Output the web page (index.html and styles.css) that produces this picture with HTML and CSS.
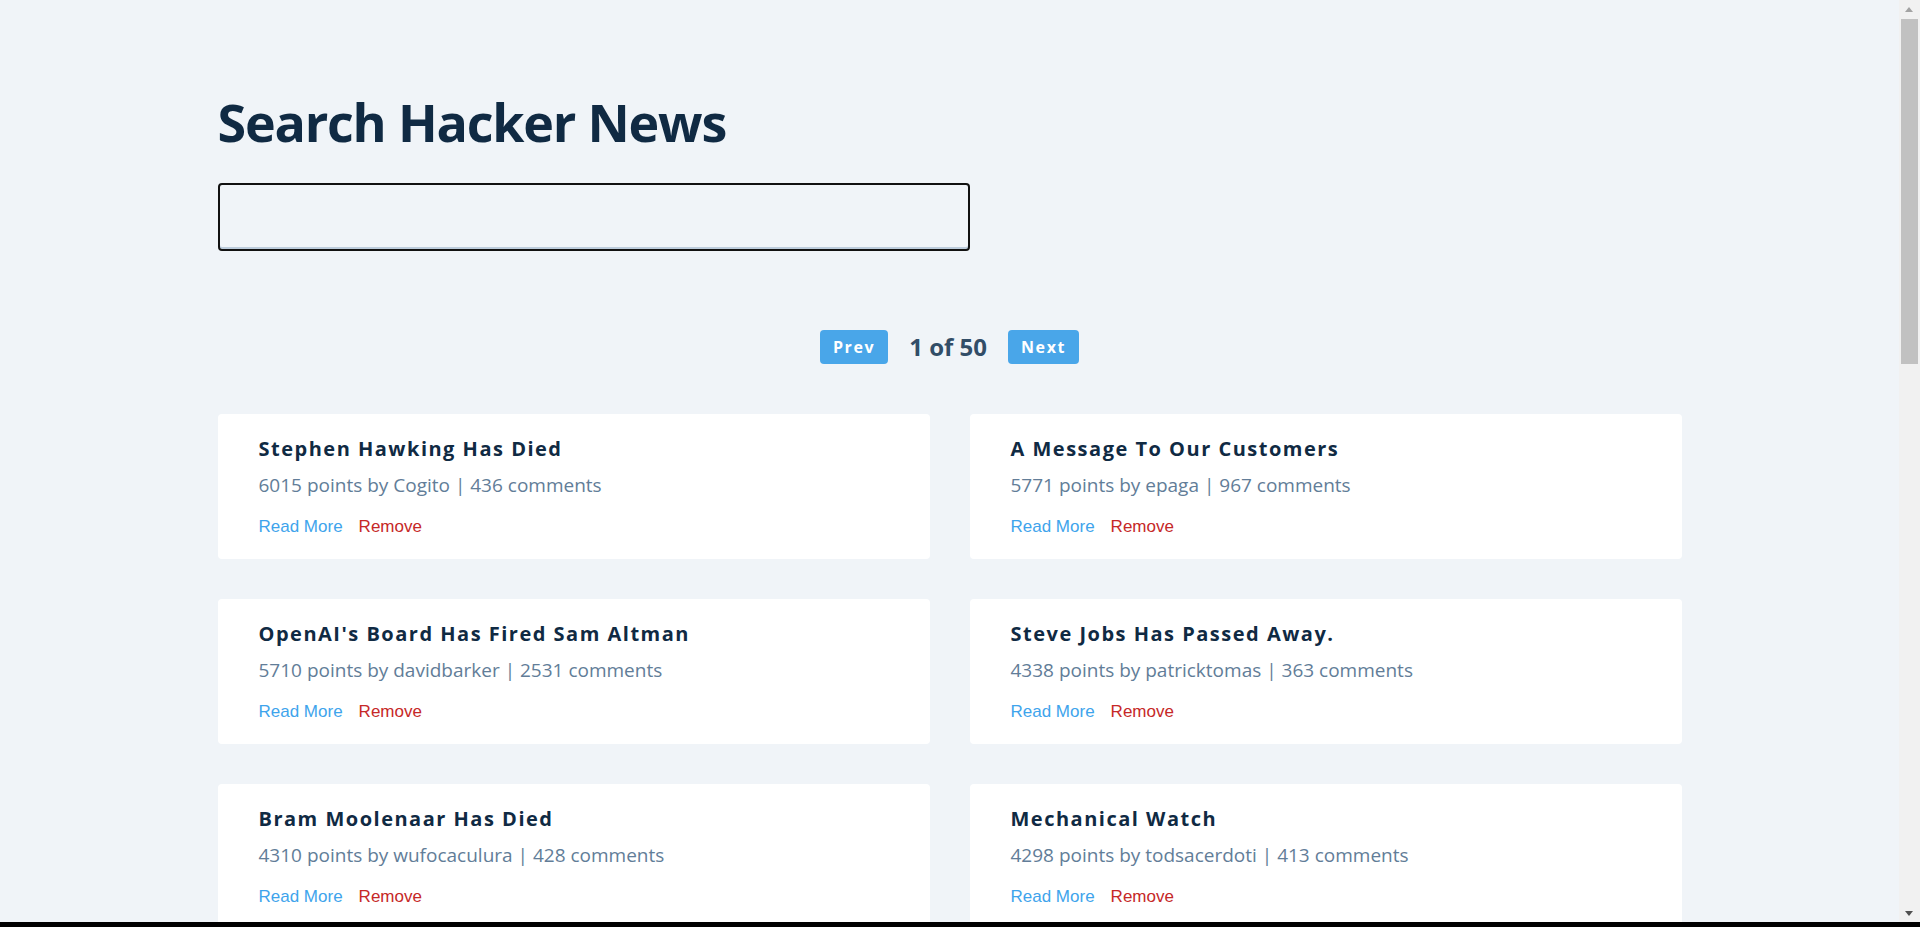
FILE: index.html
```html
<!DOCTYPE html>
<html lang="en">
<head>
<meta charset="utf-8">
<title>Search Hacker News</title>
<link rel="stylesheet" href="styles.css">
</head>
<body>
<main class="page">
  <form class="search-form">
    <h2 class="search-title">Search Hacker News</h2>
    <input class="search-input" type="text" value="">
  </form>
  <div class="pagination">
    <button class="page-btn" type="button">Prev</button>
    <p class="page-count">1 of 50</p>
    <button class="page-btn" type="button">Next</button>
  </div>
  <section class="stories">
    <article class="story"><h4 class="story-title">Stephen Hawking Has Died</h4><p class="story-info">6015 points by Cogito | 436 comments</p><div class="story-actions"><a class="read-link" href="#">Read More</a><button class="remove-btn" type="button">Remove</button></div></article>
    <article class="story"><h4 class="story-title">A Message To Our Customers</h4><p class="story-info">5771 points by epaga | 967 comments</p><div class="story-actions"><a class="read-link" href="#">Read More</a><button class="remove-btn" type="button">Remove</button></div></article>
    <article class="story"><h4 class="story-title">OpenAI's Board Has Fired Sam Altman</h4><p class="story-info">5710 points by davidbarker | 2531 comments</p><div class="story-actions"><a class="read-link" href="#">Read More</a><button class="remove-btn" type="button">Remove</button></div></article>
    <article class="story"><h4 class="story-title">Steve Jobs Has Passed Away.</h4><p class="story-info">4338 points by patricktomas | 363 comments</p><div class="story-actions"><a class="read-link" href="#">Read More</a><button class="remove-btn" type="button">Remove</button></div></article>
    <article class="story"><h4 class="story-title">Bram Moolenaar Has Died</h4><p class="story-info">4310 points by wufocaculura | 428 comments</p><div class="story-actions"><a class="read-link" href="#">Read More</a><button class="remove-btn" type="button">Remove</button></div></article>
    <article class="story"><h4 class="story-title">Mechanical Watch</h4><p class="story-info">4298 points by todsacerdoti | 413 comments</p><div class="story-actions"><a class="read-link" href="#">Read More</a><button class="remove-btn" type="button">Remove</button></div></article>
  </section>
</main>
<div class="scrollbar" aria-hidden="true">
  <span class="scroll-arrow scroll-arrow-up"></span>
  <span class="scroll-thumb"></span>
  <span class="scroll-arrow scroll-arrow-down"></span>
</div>
<div class="frame-edge"></div>
</body>
</html>
```

FILE: styles.css
```css
* {
  box-sizing: border-box;
}

html {
  background: #f0f4f8;
}

body {
  margin: 0;
  padding-right: 21px;
  background: #f0f4f8;
  font-family: "Open Sans", "Noto Sans", sans-serif;
  color: #102a43;
}

.page {
  width: 1464px;
  margin: 0 auto;
  padding: 90px 0 10px;
}

.search-form {
  margin: 0;
}

.search-title {
  margin: 0;
  font-size: 52px;
  line-height: 64px;
  font-weight: 700;
  color: #102a43;
  letter-spacing: -1.2px;
}

.search-input {
  display: block;
  margin-top: 29px;
  width: 752px;
  height: 68px;
  background: #f0f4f8;
  border: 2.5px solid #111111;
  border-radius: 4px;
  box-shadow: inset 0 -2px 0 #bcccdc;
  outline: none;
  font-size: 20px;
  padding: 0 16px;
}

.pagination {
  display: flex;
  justify-content: center;
  align-items: center;
  gap: 21px;
  margin-top: 79px;
}

.page-btn {
  height: 34px;
  padding: 0 13px;
  border: none;
  border-radius: 4px;
  background: #49a6e9;
  color: #ffffff;
  font-family: "Open Sans", "Noto Sans", sans-serif;
  font-size: 16px;
  font-weight: 700;
  letter-spacing: 1.6px;
  line-height: 34px;
}

.page-count {
  margin: 0;
  font-size: 24px;
  font-weight: 700;
  line-height: 34px;
  color: #324d67;
}

.stories {
  display: grid;
  grid-template-columns: 712px 712px;
  column-gap: 40px;
  row-gap: 40px;
  margin-top: 50px;
}

.story {
  background: #ffffff;
  border-radius: 4px;
  padding: 20px 40px 23px 41px;
}

.story-title {
  margin: 0;
  font-size: 20px;
  line-height: 30px;
  font-weight: 700;
  letter-spacing: 1.5px;
  color: #102a43;
}

.story-info {
  margin: 7px 0 0;
  font-size: 19px;
  line-height: 28px;
  color: #627d98;
}

.story-actions {
  display: flex;
  align-items: center;
  gap: 16px;
  margin-top: 19px;
  height: 18px;
}

.read-link {
  font-family: "Liberation Sans", Arial, sans-serif;
  font-size: 17px;
  line-height: 18px;
  color: #3ea4ec;
  text-decoration: none;
}

.remove-btn {
  padding: 0;
  border: none;
  background: transparent;
  font-family: "Liberation Sans", Arial, sans-serif;
  font-size: 17px;
  line-height: 18px;
  color: #c62828;
}

.scrollbar {
  position: fixed;
  top: 0;
  right: 0;
  bottom: 0;
  width: 21px;
  background: #f1f1f1;
}

.scroll-thumb {
  position: absolute;
  top: 19px;
  left: 2px;
  width: 17px;
  height: 345px;
  background: #c1c1c1;
}

.scroll-arrow {
  position: absolute;
  left: 6px;
  width: 0;
  height: 0;
  border-left: 4px solid transparent;
  border-right: 4px solid transparent;
}

.scroll-arrow-up {
  top: 7px;
  border-bottom: 5px solid #a3a3a3;
}

.scroll-arrow-down {
  bottom: 11px;
  border-top: 5px solid #505050;
}

.frame-edge {
  position: fixed;
  left: 0;
  right: 0;
  bottom: 0;
  height: 5px;
  background: #000000;
}
```
